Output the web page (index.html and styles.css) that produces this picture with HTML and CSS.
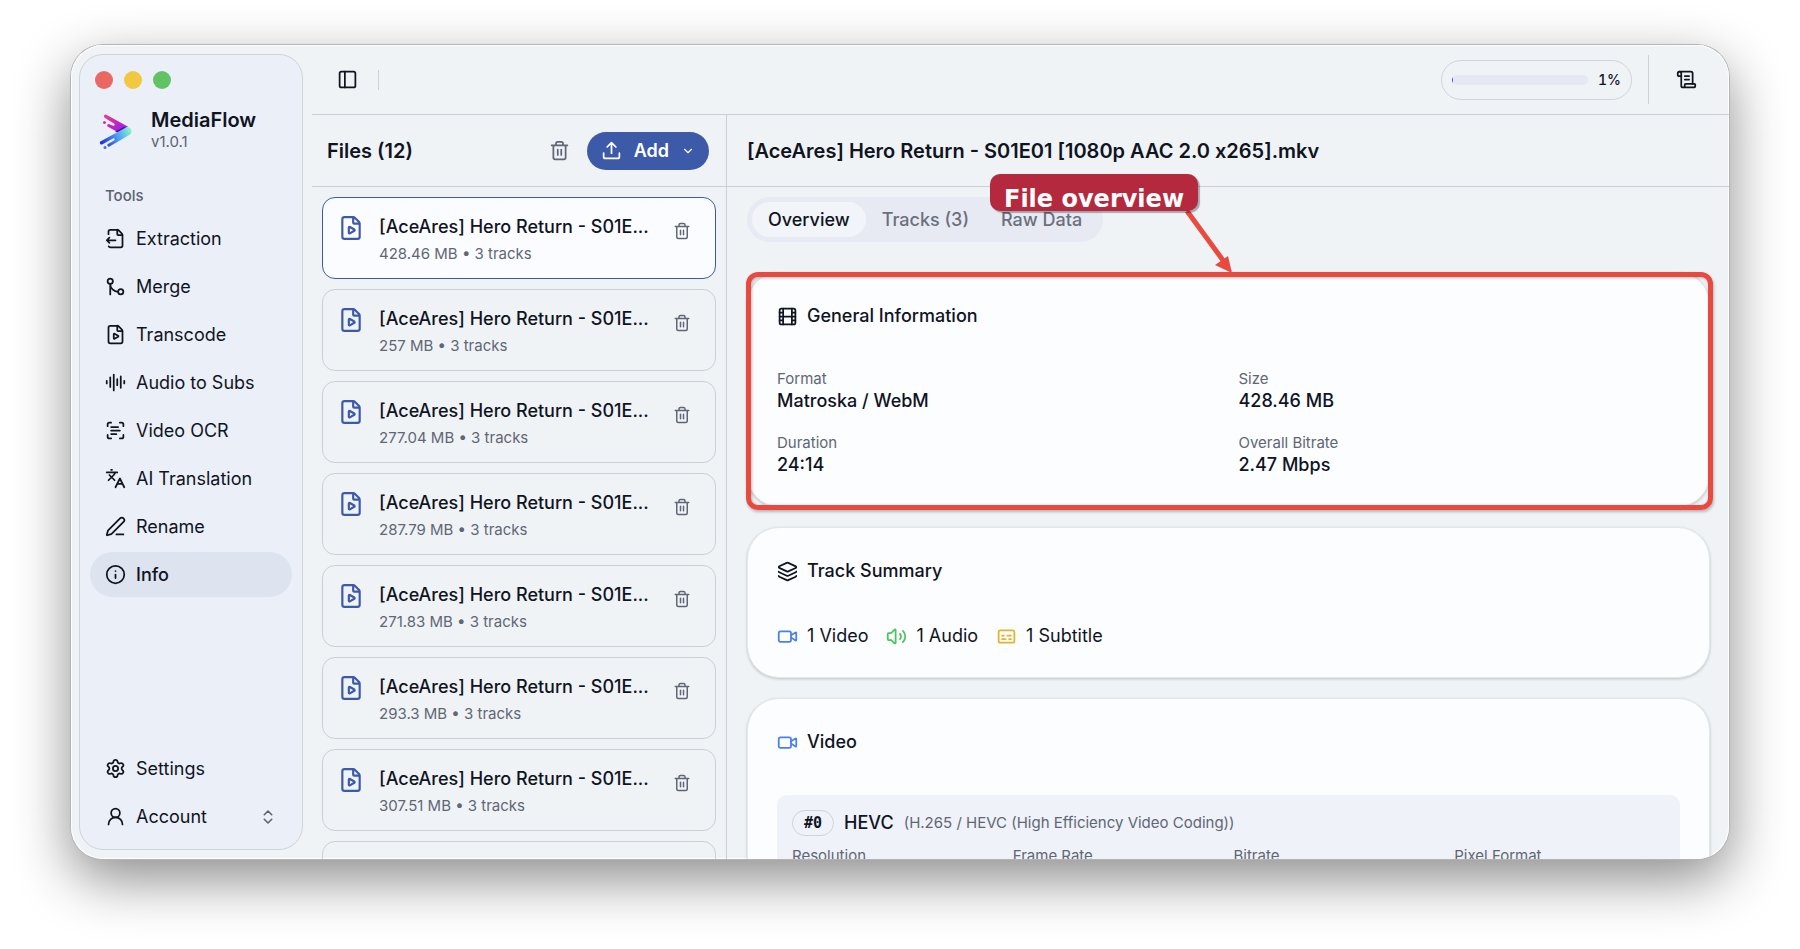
FILE: index.html
```html
<!DOCTYPE html>
<html lang="en">
<head>
    <meta charset="UTF-8">
    <meta name="viewport" content="width=device-width, initial-scale=1.0">
    <title>MediaFlow</title>
    <link rel="stylesheet" href="styles.css">
</head>
<body>

    <!-- icon set -->
    <svg class="sprite" aria-hidden="true">
        <symbol id="i-extract" viewBox="0 0 24 24"><path d="M4.226 20.925A2 2 0 0 0 6 22h12a2 2 0 0 0 2-2V8a2.4 2.4 0 0 0-.706-1.706l-3.588-3.588A2.4 2.4 0 0 0 14 2H6a2 2 0 0 0-2 2v3.127M14 2v5a1 1 0 0 0 1 1h5M5 11l-3 3M5 17l-3-3h10"/></symbol>
        <symbol id="i-merge" viewBox="0 0 24 24"><circle cx="18" cy="18" r="3"/><circle cx="6" cy="6" r="3"/><path d="M6 21V9a9 9 0 0 0 9 9"/></symbol>
        <symbol id="i-file" viewBox="0 0 24 24"><path d="M6 22a2 2 0 0 1-2-2V4a2 2 0 0 1 2-2h8a2.4 2.4 0 0 1 1.704.706l3.588 3.588A2.4 2.4 0 0 1 20 8v12a2 2 0 0 1-2 2zM14 2v5a1 1 0 0 0 1 1h5"/><path d="M15.033 13.44a.647.647 0 0 1 0 1.12l-4.065 2.352a.645.645 0 0 1-.968-.56v-4.704a.645.645 0 0 1 .967-.56z"/></symbol>
        <symbol id="i-audio" viewBox="0 0 24 24"><path d="M2 10v3M6 6v11M10 3v18M14 8v7M18 5v13M22 10v3"/></symbol>
        <symbol id="i-ocr" viewBox="0 0 24 24"><path d="M3 7V5a2 2 0 0 1 2-2h2M17 3h2a2 2 0 0 1 2 2v2M21 17v2a2 2 0 0 1-2 2h-2M7 21H5a2 2 0 0 1-2-2v-2M7 8h8M7 12h10M7 16h6"/></symbol>
        <symbol id="i-translate" viewBox="0 0 24 24"><path d="m5 8 6 6M4 14l6-6 2-3M2 5h12M7 2h1M22 22l-5-10-5 10M14 18h6"/></symbol>
        <symbol id="i-pen" viewBox="0 0 24 24"><path d="M13 21h8M21.174 6.812a1 1 0 0 0-3.986-3.987L3.842 16.174a2 2 0 0 0-.5.83l-1.321 4.352a.5.5 0 0 0 .623.622l4.353-1.32a2 2 0 0 0 .83-.497z"/></symbol>
        <symbol id="i-info" viewBox="0 0 24 24"><circle cx="12" cy="12" r="10"/><path d="M12 16v-4M12 8h.01"/></symbol>
        <symbol id="i-settings" viewBox="0 0 24 24"><path d="M9.671 4.136a2.34 2.34 0 0 1 4.659 0 2.34 2.34 0 0 0 3.319 1.915 2.34 2.34 0 0 1 2.33 4.033 2.34 2.34 0 0 0 0 3.831 2.34 2.34 0 0 1-2.33 4.033 2.34 2.34 0 0 0-3.319 1.915 2.34 2.34 0 0 1-4.659 0 2.34 2.34 0 0 0-3.32-1.915 2.34 2.34 0 0 1-2.33-4.033 2.34 2.34 0 0 0 0-3.831A2.34 2.34 0 0 1 6.35 6.051a2.34 2.34 0 0 0 3.319-1.915"/><circle cx="12" cy="12" r="3"/></symbol>
        <symbol id="i-user" viewBox="0 0 24 24"><circle cx="12" cy="8" r="5"/><path d="M20 21a8 8 0 0 0-16 0"/></symbol>
        <symbol id="i-updown" viewBox="0 0 24 24"><path d="m7 15 5 5 5-5M7 9l5-5 5 5"/></symbol>
        <symbol id="i-panel" viewBox="0 0 24 24"><rect x="3" y="3" width="18" height="18" rx="2"/><path d="M9 3v18"/></symbol>
        <symbol id="i-trash" viewBox="0 0 24 24"><path d="M10 11v6M14 11v6M19 6v14a2 2 0 0 1-2 2H7a2 2 0 0 1-2-2V6M3 6h18M8 6V4a2 2 0 0 1 2-2h4a2 2 0 0 1 2 2v2"/></symbol>
        <symbol id="i-upload" viewBox="0 0 24 24"><path d="M12 3v12M17 8l-5-5-5 5M21 15v4a2 2 0 0 1-2 2H5a2 2 0 0 1-2-2v-4"/></symbol>
        <symbol id="i-down" viewBox="0 0 24 24"><path d="m6 9 6 6 6-6"/></symbol>
        <symbol id="i-film" viewBox="0 0 24 24"><rect x="3" y="3" width="18" height="18" rx="2"/><path d="M7 3v18M3 7.5h4M3 12h18M3 16.5h4M17 3v18M17 7.5h4M17 16.5h4"/></symbol>
        <symbol id="i-layers" viewBox="0 0 24 24"><path d="M12.83 2.18a2 2 0 0 0-1.66 0L2.6 6.08a1 1 0 0 0 0 1.83l8.58 3.91a2 2 0 0 0 1.66 0l8.58-3.9a1 1 0 0 0 0-1.83z"/><path d="M2 12a1 1 0 0 0 .58.91l8.6 3.91a2 2 0 0 0 1.65 0l8.58-3.9A1 1 0 0 0 22 12M2 17a1 1 0 0 0 .58.91l8.6 3.91a2 2 0 0 0 1.65 0l8.58-3.9A1 1 0 0 0 22 17"/></symbol>
        <symbol id="i-video" viewBox="0 0 24 24"><path d="m16 13 5.223 3.482a.5.5 0 0 0 .777-.416V7.87a.5.5 0 0 0-.752-.432L16 10.5"/><rect x="2" y="6" width="14" height="12" rx="2"/></symbol>
        <symbol id="i-volume" viewBox="0 0 24 24"><path d="M11 4.702a.705.705 0 0 0-1.203-.498L6.413 7.587A1.4 1.4 0 0 1 5.416 8H3a1 1 0 0 0-1 1v6a1 1 0 0 0 1 1h2.416a1.4 1.4 0 0 1 .997.413l3.383 3.384A.705.705 0 0 0 11 19.298zM16 9a5 5 0 0 1 0 6M19.364 18.364a9 9 0 0 0 0-12.728"/></symbol>
        <symbol id="i-captions" viewBox="0 0 24 24"><rect x="3" y="5" width="18" height="14" rx="2"/><path d="M7 15h4M15 15h2M7 11h2M13 11h4"/></symbol>
        <symbol id="i-scroll" viewBox="0 0 24 24"><path d="M15 12h-5M15 8h-5M19 17V5a2 2 0 0 0-2-2H4"/><path d="M8 21h12a2 2 0 0 0 2-2v-1a1 1 0 0 0-1-1H11a1 1 0 0 0-1 1v1a2 2 0 1 1-4 0V5a2 2 0 1 0-4 0v2a1 1 0 0 0 1 1h3"/></symbol>
    </svg>

    <div class="window">
        <aside class="sidebar">
            <div class="dots">
                <span class="dot red"></span>
                <span class="dot yellow"></span>
                <span class="dot green"></span>
            </div>

            <div class="brand">
                <svg class="logo" viewBox="0 0 32 36" aria-hidden="true">
                    <defs>
                        <linearGradient id="pink" x1="0" y1="0" x2="1" y2="1">
                            <stop offset="0" stop-color="#e8458b"/>
                            <stop offset="0.5" stop-color="#c026c4"/>
                            <stop offset="1" stop-color="#8a1ff0"/>
                        </linearGradient>
                        <linearGradient id="cyan" gradientUnits="userSpaceOnUse" x1="1" y1="32" x2="31" y2="16">
                            <stop offset="0" stop-color="#1626e0"/>
                            <stop offset="0.55" stop-color="#4a9cf5"/>
                            <stop offset="1" stop-color="#8af5d0"/>
                        </linearGradient>
                    </defs>
                    <path fill="url(#pink)" d="M6.500.700 28 12.800 18 18.300 8 12.800a1.500 1.500 0 0 1 1.500-2.600l3.500 1.600c1.600.4 2.200-1.500 1-2.300L5 4a1.800 1.800 0 0 1 1.500-3.300z"/>
                    <circle fill="#c935b8" cx="4.500" cy="8.500" r="1.500"/>
                    <path fill="#4b159c" d="m15 17.500 9-4.500 3 1-8.500 5z"/>
                    <path fill="url(#cyan)" d="M26 13.600c4-1.600 7.500 2.800 4.500 6.600L9.500 32.600a1.500 1.500 0 0 1-1.600-2.500l6.100-3.700c1.400-1 .4-2.600-1-2L2.500 30.300A1.700 1.700 0 0 1 .8 27.300z"/>
                    <circle fill="#3c72ee" cx="5" cy="33.500" r="1.500"/>
                </svg>
                <div>
                    <div class="brand-name">MediaFlow</div>
                    <div class="brand-version">v1.0.1</div>
                </div>
            </div>

            <div class="nav-label">Tools</div>
            <nav class="nav">
                <a href="#"><svg class="icon"><use href="#i-extract"/></svg>Extraction</a>
                <a href="#"><svg class="icon"><use href="#i-merge"/></svg>Merge</a>
                <a href="#"><svg class="icon"><use href="#i-file"/></svg>Transcode</a>
                <a href="#"><svg class="icon"><use href="#i-audio"/></svg>Audio to Subs</a>
                <a href="#"><svg class="icon"><use href="#i-ocr"/></svg>Video OCR</a>
                <a href="#"><svg class="icon"><use href="#i-translate"/></svg>AI Translation</a>
                <a href="#"><svg class="icon"><use href="#i-pen"/></svg>Rename</a>
                <a href="#" class="active"><svg class="icon"><use href="#i-info"/></svg>Info</a>
            </nav>

            <nav class="nav nav-bottom">
                <a href="#"><svg class="icon"><use href="#i-settings"/></svg>Settings</a>
                <a href="#"><svg class="icon"><use href="#i-user"/></svg>Account<svg class="icon small updown"><use href="#i-updown"/></svg></a>
            </nav>
        </aside>

        <main class="main">
            <header class="topbar">
                <button type="button" class="icon-btn" aria-label="Toggle sidebar"><svg class="icon"><use href="#i-panel"/></svg></button>
                <span class="divider short"></span>
                <div class="progress-pill">
                    <progress value="1" max="100" aria-label="Progress"></progress>
                    <span>1%</span>
                </div>
                <span class="divider tall"></span>
                <button type="button" class="icon-btn" aria-label="Logs"><svg class="icon"><use href="#i-scroll"/></svg></button>
            </header>

            <div class="panels">
                <section class="files">
                    <div class="panel-head files-head">
                        <h2>Files (12)</h2>
                        <button type="button" class="icon-btn muted" aria-label="Clear files"><svg class="icon"><use href="#i-trash"/></svg></button>
                        <button type="button" class="add-btn"><svg class="icon"><use href="#i-upload"/></svg>Add<svg class="icon tiny"><use href="#i-down"/></svg></button>
                    </div>
                    <ul class="file-list" id="fileList"></ul>
                </section>

                <section class="detail">
                    <div class="panel-head">
                        <h2>[AceAres] Hero Return - S01E01 [1080p AAC 2.0 x265].mkv</h2>
                    </div>

                    <div class="detail-body">
                        <div class="tabs" role="tablist">
                            <button type="button" role="tab" aria-selected="true" class="active">Overview</button>
                            <button type="button" role="tab" aria-selected="false">Tracks (3)</button>
                            <button type="button" role="tab" aria-selected="false">Raw Data</button>
                        </div>

                        <div class="card">
                            <h3><svg class="icon"><use href="#i-film"/></svg>General Information</h3>
                            <dl class="facts">
                                <div><dt>Format</dt><dd>Matroska / WebM</dd></div>
                                <div><dt>Size</dt><dd>428.46 MB</dd></div>
                                <div><dt>Duration</dt><dd>24:14</dd></div>
                                <div><dt>Overall Bitrate</dt><dd>2.47 Mbps</dd></div>
                            </dl>
                            <div class="highlight"></div>
                        </div>

                        <div class="card">
                            <h3><svg class="icon"><use href="#i-layers"/></svg>Track Summary</h3>
                            <div class="summary">
                                <span><svg class="icon blue"><use href="#i-video"/></svg>1 Video</span>
                                <span><svg class="icon green"><use href="#i-volume"/></svg>1 Audio</span>
                                <span><svg class="icon yellow"><use href="#i-captions"/></svg>1 Subtitle</span>
                            </div>
                        </div>

                        <div class="card">
                            <h3><svg class="icon blue"><use href="#i-video"/></svg>Video</h3>
                            <div class="track">
                                <div class="track-head">
                                    <span class="badge">#0</span>
                                    <strong>HEVC</strong>
                                    <span class="codec">(H.265 / HEVC (High Efficiency Video Coding))</span>
                                </div>
                                <div class="track-cols">
                                    <span>Resolution</span>
                                    <span>Frame Rate</span>
                                    <span>Bitrate</span>
                                    <span>Pixel Format</span>
                                </div>
                            </div>
                        </div>
                    </div>

                    <!-- callout pointing at the first card -->
                    <svg class="arrow" viewBox="0 0 60 70" aria-hidden="true">
                        <path d="M8 4 46 56" stroke="#e84a3f" stroke-width="5"/>
                        <path d="M53 66 36 58 49 49z" fill="#e84a3f"/>
                    </svg>
                    <div class="callout">File overview</div>
                </section>
            </div>
        </main>
    </div>

    <script>
        var sizes = ['428.46 MB', '257 MB', '277.04 MB', '287.79 MB', '271.83 MB', '293.3 MB', '307.51 MB', '284.12 MB'];

        // Build the file list, the first file is the selected one
        document.getElementById('fileList').innerHTML = sizes.map(function(size, i) {
            return `
                <li class="file${i === 0 ? ' selected' : ''}">
                    <svg class="icon big"><use href="#i-file"/></svg>
                    <div class="file-text">
                        <div class="file-name">[AceAres] Hero Return - S01E...</div>
                        <div class="file-meta">${size} • 3 tracks</div>
                    </div>
                    <button type="button" class="icon-btn muted" aria-label="Remove file"><svg class="icon small"><use href="#i-trash"/></svg></button>
                </li>
            `;
        }).join('');
    </script>

</body>
</html>
```
FILE: styles.css
```css
* {
    box-sizing: border-box;
}

body {
    font-family: Inter, "Liberation Sans", sans-serif;
    font-size: 18px;
    line-height: 24px;
    color: #10141f;
    background-color: #fff;
    margin: 0;
    padding: 45px 71px 90px;
    height: 100vh;
    overflow: hidden;
}

h2, h3, ul, dl, dd {
    margin: 0;
    padding: 0;
    font-size: 18px;
}

button {
    font: inherit;
    color: inherit;
    background: none;
    border: none;
    padding: 0;
    cursor: pointer;
}

.sprite {
    display: none;
}

.icon {
    width: 21px;
    height: 21px;
    flex: none;
    fill: none;
    stroke: currentColor;
    stroke-width: 2;
    stroke-linecap: round;
    stroke-linejoin: round;
}

.icon.big {
    width: 26px;
    height: 26px;
}

.icon.small {
    width: 18px;
    height: 18px;
}

.icon.tiny {
    width: 14px;
    height: 14px;
}

.blue { color: #4a7fee; }
.green { color: #4cc35c; }
.yellow { color: #e5b32a; }

.window {
    display: flex;
    height: 100%;
    background-color: #eff3f6;
    border-radius: 32px;
    overflow: hidden;
    box-shadow: inset 0 0 0 1px #fff, 0 0 0 1px #b4b4b4, 0 20px 56px rgba(0, 0, 0, 0.46);
}

/* sidebar */
.sidebar {
    display: flex;
    flex-direction: column;
    flex: none;
    width: 224px;
    margin: 9px 9px 9px 8px;
    padding: 0 10px 10px;
    background-color: #ebeff8;
    border: 1px solid #cfd3da;
    border-radius: 24px;
}

.dots {
    display: flex;
    gap: 11px;
    padding: 16px 5px 0;
}

.dot {
    width: 18px;
    height: 18px;
    border-radius: 50%;
}

.dot.red { background-color: #ec6762; }
.dot.yellow { background-color: #f1c840; }
.dot.green { background-color: #62c366; }

.brand {
    display: flex;
    align-items: center;
    gap: 19px;
    padding: 19px 10px 0;
}

.logo {
    width: 32px;
    height: 36px;
    margin-top: 4px;
}

.brand-name {
    font-size: 20px;
    font-weight: 600;
}

.brand-version {
    font-size: 15px;
    line-height: 20px;
    color: #5b6270;
}

.nav-label {
    padding: 32px 15px 8px;
    font-size: 15px;
    line-height: 24px;
    font-weight: 500;
    color: #5b6270;
}

.nav {
    display: flex;
    flex-direction: column;
    gap: 3px;
}

.nav a {
    display: flex;
    align-items: center;
    gap: 10px;
    height: 45px;
    padding: 0 15px;
    border-radius: 23px;
    color: inherit;
    text-decoration: none;
}

.nav a.active {
    background-color: #dde3ef;
    font-weight: 500;
}

.nav-bottom {
    margin-top: auto;
}

.updown {
    margin-left: auto;
    color: #5b6270;
}

/* main area */
.main {
    display: flex;
    flex-direction: column;
    flex: 1;
    min-width: 0;
}

.topbar {
    display: flex;
    align-items: center;
    flex: none;
    height: 70px;
    padding: 0 32px 0 25px;
    border-bottom: 1px solid #c9d0d8;
}

.icon-btn {
    display: flex;
}

.muted {
    color: #5f6675;
}

.divider {
    width: 1px;
    background-color: #cbd1d8;
}

.divider.short {
    height: 20px;
    margin-left: 20px;
}

.divider.tall {
    height: 49px;
    margin: 0 27px 0 16px;
}

.progress-pill {
    display: flex;
    align-items: center;
    gap: 10px;
    height: 40px;
    margin-left: auto;
    padding: 0 10px;
    border: 1px solid #cfd4dc;
    border-radius: 20px;
    font-size: 14px;
    font-weight: 500;
    font-variant-numeric: tabular-nums;
}

progress {
    width: 136px;
    height: 10px;
    border: none;
    border-radius: 5px;
    overflow: hidden;
    appearance: none;
}

progress::-webkit-progress-bar {
    background-color: #e6e9f2;
}

progress::-webkit-progress-value {
    background-color: #3d5aa9;
}

.panels {
    display: flex;
    flex: 1;
    min-height: 0;
}

.panel-head {
    display: flex;
    align-items: center;
    flex: none;
    height: 72px;
    padding: 0 20px;
    border-bottom: 1px solid #c9d0d8;
}

.panel-head h2 {
    font-size: 20px;
    font-weight: 600;
}

/* file list */
.files {
    display: flex;
    flex-direction: column;
    flex: none;
    width: 415px;
    border-right: 1px solid #c9d0d8;
}

.files-head {
    padding: 0 17px 0 15px;
}

.files-head h2 {
    margin-right: auto;
}

.add-btn {
    display: flex;
    align-items: center;
    gap: 12px;
    height: 38px;
    margin-left: 17px;
    padding: 0 14px;
    border-radius: 19px;
    background-color: #3d5aa9;
    color: #fff;
    font-weight: 600;
}

.file-list {
    display: flex;
    flex-direction: column;
    gap: 10px;
    flex: 1;
    min-height: 0;
    padding: 10px;
    overflow: hidden;
    list-style: none;
}

.file {
    display: flex;
    align-items: flex-start;
    flex: none;
    height: 82px;
    padding: 17px 24px 0 15px;
    border: 1px solid #cbd0d8;
    border-radius: 13px;
}

.file.selected {
    background-color: #fbfcff;
    border-color: #3d5aa9;
}

.file .big {
    color: #3d5aa9;
}

.file-text {
    flex: 1;
    min-width: 0;
    margin-left: 15px;
}

.file-name {
    line-height: 24px;
    margin-bottom: 3px;
    font-weight: 500;
    white-space: nowrap;
}

.file-meta {
    font-size: 15px;
    color: #5f6675;
}

.file .icon-btn {
    margin-top: 7px;
}

/* detail panel */
.detail {
    display: flex;
    flex-direction: column;
    flex: 1;
    min-width: 0;
    position: relative;
}

.detail-body {
    display: flex;
    flex-direction: column;
    flex: 1;
    min-height: 0;
    padding: 10px 19px 0 20px;
    overflow: hidden;
}

.tabs {
    display: flex;
    align-items: center;
    align-self: flex-start;
    flex: none;
    height: 45px;
    margin-bottom: 30px;
    padding: 0 5px;
    border-radius: 23px;
    background-color: #e7eaf2;
}

.tabs button {
    height: 35px;
    padding: 0 16px;
    border-radius: 18px;
    font-weight: 500;
    color: #6a707d;
}

.tabs button.active {
    background-color: #f1f4f8;
    color: #10141f;
}

.card {
    position: relative;
    flex: none;
    margin-bottom: 20px;
    padding: 31px 29px 29px;
    border: 1px solid #e3e6eb;
    border-radius: 32px;
    background-color: #fbfdff;
    box-shadow: 0 1px 3px rgba(0, 0, 0, 0.2);
}

.card h3 {
    display: flex;
    align-items: center;
    gap: 9px;
    margin-bottom: 41px;
    font-weight: 500;
}

.facts {
    display: grid;
    grid-template-columns: 1fr 1fr;
    gap: 20px;
}

.facts dt {
    font-size: 15px;
    line-height: 20px;
    color: #5f6675;
}

.facts dd {
    font-weight: 500;
}

.summary {
    display: flex;
    gap: 18px;
}

.summary span {
    display: flex;
    align-items: center;
    gap: 9px;
}

.track {
    padding: 15px;
    border-radius: 10px;
    background-color: #eff2f8;
}

.track-head {
    display: flex;
    align-items: center;
    gap: 10px;
    margin-bottom: 8px;
}

.track-head strong {
    font-weight: 500;
}

.codec, .track-cols {
    font-size: 15px;
    color: #5f6675;
}

.badge {
    padding: 0 11px;
    border: 1px solid #cfd3dc;
    border-radius: 13px;
    font-family: "DejaVu Sans Mono", monospace;
    font-size: 15px;
    font-weight: 700;
}

.track-cols {
    display: grid;
    grid-template-columns: repeat(4, 1fr);
    gap: 10px;
}

/* annotation */
.highlight {
    position: absolute;
    inset: -1px -4px -4px -2px;
    border: 5px solid #e84a3f;
    border-radius: 12px;
    box-shadow: 1px 2px 3px rgba(0, 0, 0, 0.25), inset 1px 1px 3px rgba(0, 0, 0, 0.25);
}

.callout {
    position: absolute;
    top: 59px;
    left: 263px;
    height: 37px;
    padding: 0 14px;
    border-radius: 10px;
    background-color: #b5293f;
    box-shadow: 2px 2px 1px rgba(0, 0, 0, 0.3);
    color: #fff;
    font-family: "DejaVu Sans", sans-serif;
    font-size: 24px;
    line-height: 50px;
    font-weight: 700;
    white-space: nowrap;
}

.arrow {
    position: absolute;
    top: 92px;
    left: 452px;
    width: 60px;
    height: 70px;
}
```
